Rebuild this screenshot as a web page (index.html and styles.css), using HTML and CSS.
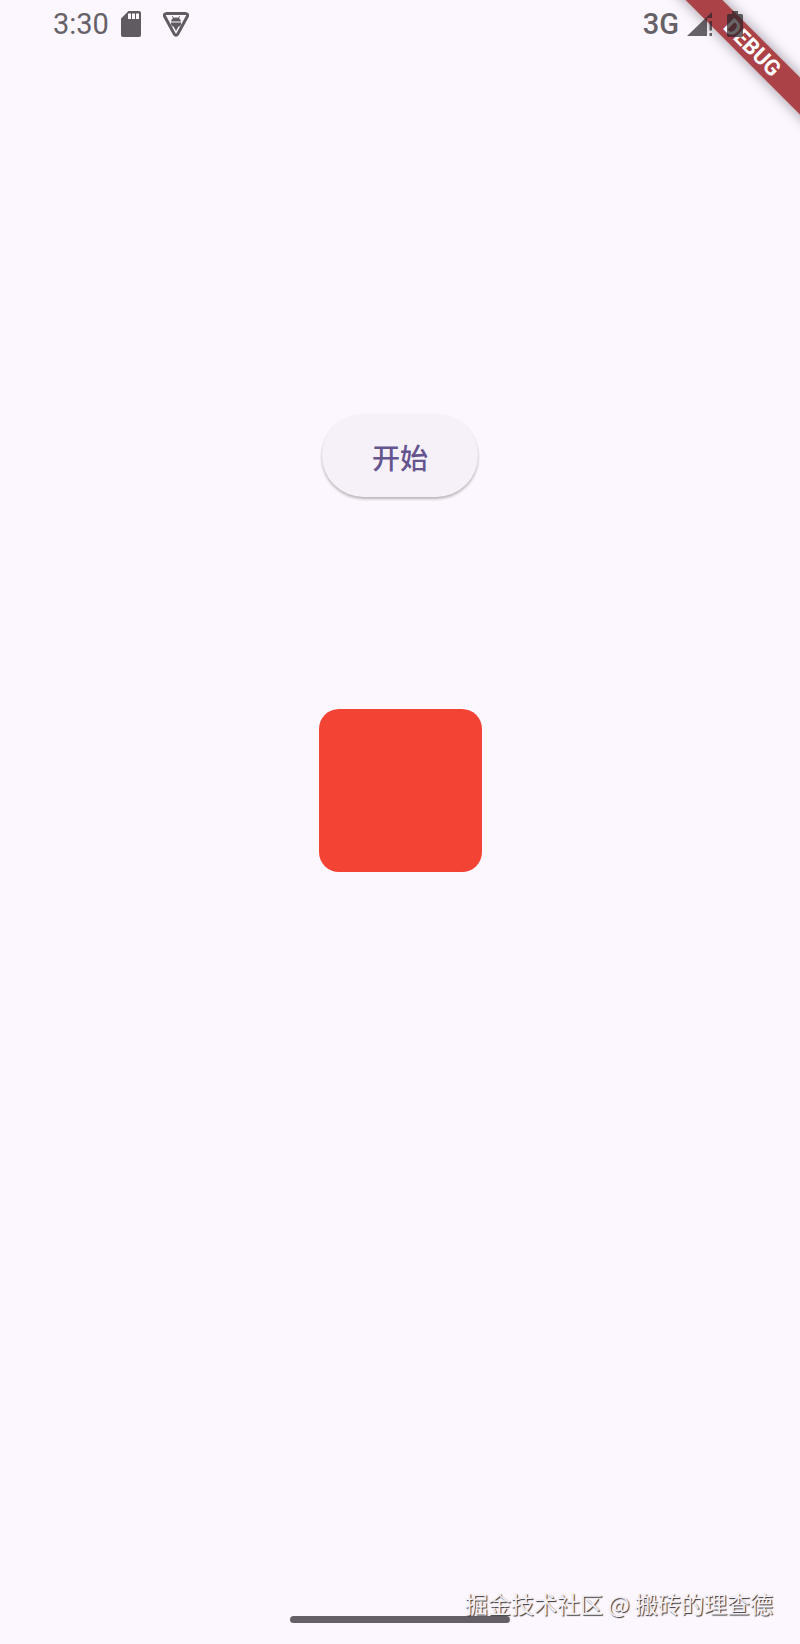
FILE: index.html
```html
<!DOCTYPE html>
<html lang="zh-CN">
<head>
<meta charset="utf-8">
<meta name="viewport" content="width=device-width, initial-scale=1">
<title>开始</title>
<link rel="stylesheet" href="styles.css">
</head>
<body>
<div class="screen">
  <div class="banner" aria-hidden="true"><span class="ribbon">DEBUG</span></div>
  <header class="status-bar">
    <div class="status-left">
      <time class="clock">3:30</time>
      <svg class="icon-sd" viewBox="0 0 20 26" aria-hidden="true">
        <path fill-rule="evenodd" d="M7.500 0H18a2 2 0 0 1 2 2V24a2 2 0 0 1-2 2H2a2 2 0 0 1-2-2V7.500zM7 2.500V8H10V2.500zM11 2.500V8H14V2.500zM15 2.500V8H18V2.500z"/>
      </svg>
      <svg class="icon-shield" viewBox="0 0 26 25" aria-hidden="true">
        <path class="outline" d="M4 1.500H22Q26 1.500 24 5L15 21.500Q13 25 11 21.500L2 5Q0 1.500 4 1.500z"/>
        <path d="M8 9.500Q8.300 7.300 10 6.300L9 4.500L9.700 4.100L10.800 5.800Q13 5.200 15.200 5.800L16.300 4.100L17 4.500L16 6.300Q17.700 7.300 18 9.500zM8 10.500H18V12.500L16.500 14.500H15.500L13 19L10.500 14.500H9.500L8 12.500z"/>
      </svg>
    </div>
    <div class="status-right">
      <span class="network">3G</span>
      <svg class="icon-signal" viewBox="0 0 26 24" aria-hidden="true">
        <path d="M0 24L25 0V6H20V24zM22.500 9H25V18.500H22.500zM22.500 21H25V24H22.500z"/>
      </svg>
      <svg class="icon-battery" viewBox="0 0 16 26" aria-hidden="true">
        <path d="M5 0H11V3H14.500Q16 3 16 4.500V24.500Q16 26 14.500 26H1.500Q0 26 0 24.500V4.500Q0 3 1.500 3H5z"/>
      </svg>
    </div>
  </header>
  <main class="content">
    <button class="start" type="button">开始</button>
    <div class="box"></div>
  </main>
  <footer class="footer">
    <div class="home-bar"></div>
    <p class="watermark">掘金技术社区 @ 搬砖的理查德</p>
  </footer>
</div>
</body>
</html>
```
FILE: styles.css
```css
body {
  margin: 0;
  background: #fcf7fe;
  font-family: Roboto, "Noto Sans CJK SC", sans-serif;
}

.screen {
  position: relative;
  display: flex;
  flex-direction: column;
  min-height: 100vh;
}

.status-bar {
  position: relative;
  display: flex;
  justify-content: space-between;
  align-items: center;
  height: 48px;
  padding: 0 57px 0 53px;
  color: #656167;
  font-size: 29px;
  line-height: 48px;
}

.status-bar svg {
  display: block;
  fill: #5f5b61;
}

.status-left,
.status-right {
  display: flex;
  align-items: center;
}

.icon-sd {
  width: 20px;
  height: 26px;
  margin-left: 12px;
}

.icon-shield {
  width: 26px;
  height: 25px;
  margin-left: 22px;
}

.icon-shield .outline {
  fill: none;
  stroke: #5f5b61;
  stroke-width: 3;
}

.network {
  font-weight: 500;
}

.icon-signal {
  width: 26px;
  height: 24px;
  margin-left: 8px;
}

.icon-battery {
  width: 16px;
  height: 26px;
  margin-left: 14px;
}

.status-right svg {
  fill: rgba(40, 36, 40, 0.7);
}

/* Corner ribbon over the top right of the screen */
.banner {
  position: absolute;
  top: 0;
  right: 0;
  width: 160px;
  height: 160px;
  overflow: hidden;
}

.ribbon {
  position: absolute;
  top: 35px;
  right: -52px;
  width: 200px;
  height: 26px;
  background: #ab4247;
  box-shadow: 0 0 14px rgba(0, 0, 0, 0.4);
  color: #fff;
  font-size: 22px;
  font-weight: 700;
  line-height: 26px;
  text-align: center;
  transform: rotate(45deg);
}

.content {
  flex: 1;
  display: flex;
  flex-direction: column;
  align-items: center;
  gap: 212px;
  padding-top: 366px;
}

.start {
  height: 83px;
  padding: 8px 50px 0;
  border: 0;
  border-radius: 42px;
  background: #f6f1f9;
  box-shadow: 0 2px 3px rgba(0, 0, 0, 0.28);
  color: #65558f;
  font-family: inherit;
  font-size: 28px;
  font-weight: 500;
  line-height: 40px;
}

.box {
  width: 163px;
  height: 163px;
  border-radius: 20px;
  background: #f24334;
}

.footer {
  position: relative;
  display: flex;
  justify-content: center;
  padding: 20px 0 21px;
}

.home-bar {
  width: 220px;
  height: 7px;
  border-radius: 4px;
  background: #656067;
}

.watermark {
  position: absolute;
  right: 27px;
  bottom: 25px;
  margin: 0;
  color: #f4f0f5;
  font-family: "Noto Sans CJK SC", sans-serif;
  font-size: 23px;
  line-height: 32px;
  text-shadow: 1px 1px 1px #333;
  white-space: nowrap;
}
```
